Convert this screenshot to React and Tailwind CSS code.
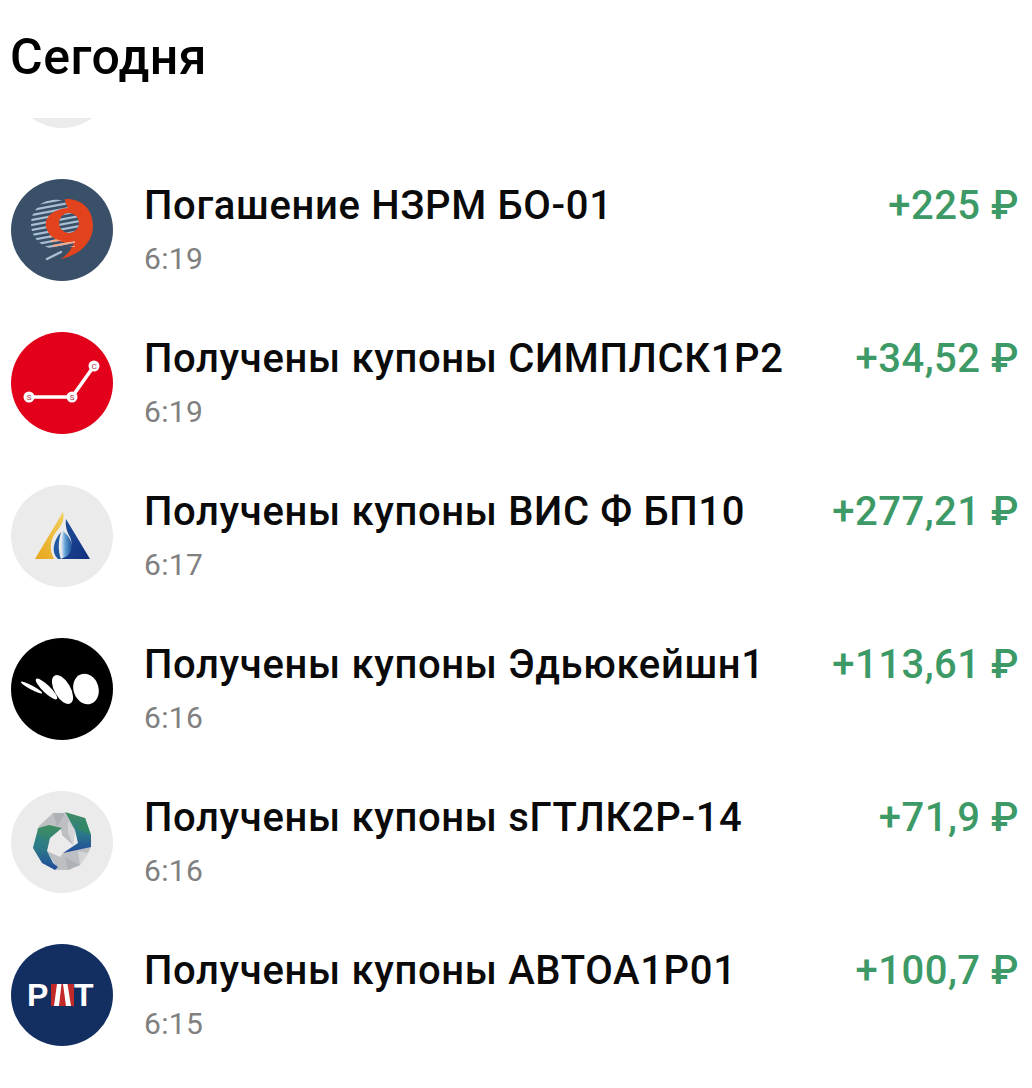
import React from 'react';

const stripeYs = [22, 27, 32, 37, 42, 47, 52, 57, 62, 67, 72];

const Stripes = ({ color, clip }) => (
  <g stroke={color} strokeWidth="2.1" clipPath={clip}>
    {stripeYs.map(y => (
      <line key={y} x1="10" y1={y + 6} x2="90" y2={y - 9} />
    ))}
  </g>
);

const Logo9 = () => (
  <svg viewBox="0 0 102 102" className="w-full h-full">
    <defs>
      <clipPath id="ringClip">
        <ellipse cx="44" cy="45" rx="24" ry="24.5" />
      </clipPath>
      <clipPath id="holeClip">
        <circle cx="58" cy="44" r="10" />
      </clipPath>
      <clipPath id="lowClip">
        <path d="M38 56 C46 62 56 64 64 62 L64 68 L42 68 Z" />
      </clipPath>
    </defs>
    <circle cx="51" cy="51" r="51" fill="#3a5069" />
    <Stripes color="#a9c0d2" clip="url(#ringClip)" />
    <path d="M54 20 C68 19 82 28 82 47 C82 64 68 76 50 80 C57 75 61 70 63 63 C52 66 38 60 35 48 C33 38 42 30 57 29 C55 26 54 23 54 20 Z" fill="#e2431c" />
    <circle cx="58" cy="44" r="10" fill="#3a5069" />
    <Stripes color="#a9c0d2" clip="url(#holeClip)" />
    <Stripes color="#f2a88e" clip="url(#lowClip)" />
    <path d="M36 80 L50 73" stroke="#a9c0d2" strokeWidth="2.4" strokeLinecap="round" />
  </svg>
);

const LogoSimple = () => (
  <svg viewBox="0 0 102 102" className="w-full h-full">
    <circle cx="51" cy="51" r="51" fill="#e2001a" />
    <path d="M18 65 H61 L83 34" fill="none" stroke="#fff" strokeWidth="3.5" />
    <circle cx="18" cy="65" r="5.5" fill="#fff" />
    <circle cx="61" cy="65" r="5.5" fill="#fff" />
    <circle cx="83" cy="34" r="5.5" fill="#fff" />
    <g fill="#a8344a" fontSize="8" fontFamily="Roboto" textAnchor="middle">
      <text x="18" y="68">S</text>
      <text x="61" y="68">S</text>
      <text x="83" y="37">C</text>
    </g>
  </svg>
);

const LogoVis = () => (
  <svg viewBox="0 0 102 102" className="w-full h-full">
    <defs>
      <linearGradient id="visGold" x1="0" y1="1" x2="1" y2="0">
        <stop offset="0" stopColor="#e6a51a" />
        <stop offset="1" stopColor="#f2cf5f" />
      </linearGradient>
      <linearGradient id="visBlue" x1="0" y1="0" x2="1" y2="1">
        <stop offset="0" stopColor="#1d4f98" />
        <stop offset="1" stopColor="#12307f" />
      </linearGradient>
      <linearGradient id="visFlame" x1="0" y1="0" x2="1" y2="0">
        <stop offset="0" stopColor="#dfeaf5" />
        <stop offset="0.4" stopColor="#5e9dd3" />
        <stop offset="1" stopColor="#1d4f98" />
      </linearGradient>
    </defs>
    <circle cx="51" cy="51" r="51" fill="#ebebeb" />
    <path d="M52 27 L24 74 H43 C38 64 39 55 45 47 C51 40 54 34 52 27 Z" fill="url(#visGold)" />
    <path d="M55 34 L79 74 H50 C58 70 63 60 59 52 C56 47 54 41 55 34 Z" fill="url(#visBlue)" />
    <path d="M50 47 C42 56 40 68 47 74 H50 C47 66 47 57 50 47 Z" fill="#1f5aa0" />
    <path d="M52 46 C50 56 49 66 52 73 C62 70 65 56 52 46 Z" fill="url(#visFlame)" />
  </svg>
);

const LogoEdu = () => (
  <svg viewBox="0 0 102 102" className="w-full h-full">
    <circle cx="51" cy="51" r="51" fill="#000" />
    <g fill="#fff">
      <ellipse cx="75" cy="51" rx="12.5" ry="15.5" transform="rotate(-18 75 51)" />
      <ellipse cx="51.5" cy="51.5" rx="8" ry="16" transform="rotate(-30 51.5 51.5)" />
      <ellipse cx="35.5" cy="51" rx="3.8" ry="14.5" transform="rotate(-46 35.5 51)" />
      <ellipse cx="20.5" cy="49.5" rx="2" ry="12" transform="rotate(-62 20.5 49.5)" />
    </g>
  </svg>
);

const LogoGtlk = () => (
  <svg viewBox="0 0 102 102" className="w-full h-full">
    <defs>
      <linearGradient id="gtlkArm" x1="0" y1="0" x2="0" y2="1">
        <stop offset="0" stopColor="#3f8f5e" />
        <stop offset="0.5" stopColor="#2c7a86" />
        <stop offset="1" stopColor="#1f4a9c" />
      </linearGradient>
    </defs>
    <circle cx="51" cy="51" r="51" fill="#ebebeb" />
    {/* серые сегменты */}
    <path d="M27 36 L42 22 L54 22 L64 39 L62 54 L51 44 L50 38 L40 39 Z" fill="#bdbfc3" />
    <path d="M36 60 L49 66 L52 62 L67 54 L80 56 L77 62 L69 74 L57 79 L44 79 L47 76 Z" fill="#bdbfc3" />
    {/* зелёно-синие ленты */}
    <path d="M27 37 L38 34 L51 37 L39 47 L36 60 L47 76 L44 79 L31 72 L22 57 L26 42 Z" fill="url(#gtlkArm)" />
    <path d="M54 21 L74 27 L80 44 L80 56 L52 62 L67 52 L64 39 Z" fill="url(#gtlkArm)" />
    {/* грани */}
    <path d="M42 22 L46 36 L54 22 Z" fill="#aeb1b5" />
    <path d="M57 30 L64 39 L62 54 L57 42 Z" fill="#d4d5d7" />
    <path d="M57 79 L54 66 L69 74 Z" fill="#aeb1b5" />
    <path d="M36 60 L42 72 L47 76 Z" fill="#d4d5d7" />
    <path d="M69 74 L67 60 L77 62 Z" fill="#d4d5d7" />
    <path d="M74 27 L66 38 L80 44 Z" fill="#338a60" fillOpacity="0.7" />
    <path d="M22 57 L36 52 L26 42 Z" fill="#2a7f8c" fillOpacity="0.6" />
  </svg>
);

const LogoRat = () => (
  <svg viewBox="0 0 102 102" className="w-full h-full">
    <circle cx="51" cy="51" r="51" fill="#132f62" />
    <text x="16" y="62" fontFamily="Liberation Sans" fontWeight="700" fontSize="32" fill="#fff">P</text>
    <rect x="40" y="40" width="23" height="22" fill="#c22a2a" />
    <path d="M46 40 H50.5 L48 62 H43 Z M52 40 H56.5 L60 62 H55 Z" fill="#fff" />
    <text x="63" y="62" fontFamily="Liberation Sans" fontWeight="700" fontSize="32" fill="#fff">T</text>
  </svg>
);

const rows = [
  { title: 'Погашение НЗРМ БО-01', time: '6:19', amount: '+225 ₽', Logo: Logo9 },
  { title: 'Получены купоны СИМПЛСК1Р2', time: '6:19', amount: '+34,52 ₽', Logo: LogoSimple },
  { title: 'Получены купоны ВИС Ф БП10', time: '6:17', amount: '+277,21 ₽', Logo: LogoVis },
  { title: 'Получены купоны Эдьюкейшн1', time: '6:16', amount: '+113,61 ₽', Logo: LogoEdu },
  { title: 'Получены купоны sГТЛК2Р-14', time: '6:16', amount: '+71,9 ₽', Logo: LogoGtlk },
  { title: 'Получены купоны АВТОА1Р01', time: '6:15', amount: '+100,7 ₽', Logo: LogoRat },
];

const App = () => {
  return (
    <div className="w-[1032px] h-[1088px] bg-white overflow-hidden font-['Roboto',sans-serif]">
      <div className="h-[118px] pl-[10px] pt-[29px]">
        <h1 className="text-[50px] leading-[56px] font-medium tracking-[0.5px] text-black">Сегодня</h1>
      </div>
      {/* строка, уехавшая под заголовок */}
      <div className="h-[10px] overflow-hidden pl-[11px]">
        <div className="w-[102px] h-[102px] -mt-[92px] rounded-full bg-[#ebebeb]" />
      </div>
      <div className="pt-[51px]">
        {rows.map(({ title, time, amount, Logo }) => (
          <div key={title} className="flex items-start h-[153px] pl-[11px] pr-[13px]">
            <div className="w-[102px] h-[102px] shrink-0">
              <Logo />
            </div>
            <div className="ml-[31px] flex-1">
              <div className="text-[40px] leading-[54px] font-medium tracking-[0.65px] text-[#0a0a0a]">{title}</div>
              <div className="text-[30px] leading-[40px] mt-[6px] tracking-[0.3px] text-[#808080]">{time}</div>
            </div>
            <div className="text-[40px] leading-[54px] font-medium tracking-[0.5px] text-[#3d9a66]">{amount}</div>
          </div>
        ))}
      </div>
    </div>
  );
};

export default App;
